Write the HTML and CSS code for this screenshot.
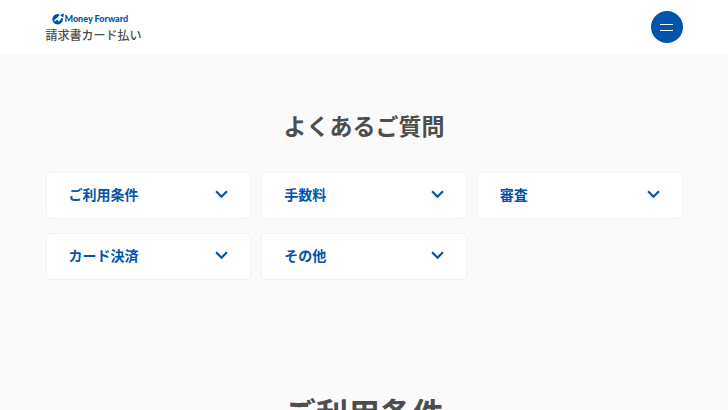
FILE: index.html
```html
<!DOCTYPE html>
<html lang="ja">
<head>
  <meta charset="UTF-8">
  <meta name="viewport" content="width=device-width, initial-scale=1">
  <title>よくあるご質問 | マネーフォワード 請求書カード払い</title>
  <link rel="stylesheet" href="styles.css">
</head>
<body>
  <!-- Header -->
  <header class="header">
    <a class="logo" href="#">
      <span class="logo-brand">
        <svg class="logo-mark" viewBox="0 0 24 24" aria-hidden="true">
          <path d="M15.5 3A10.5 10.5 0 1 0 21.6 11L19 9.2l-5 7.6-4-4.4-4.4 4.2" fill="#0054ac"/>
          <path d="M5 16l5-5 3.8 4.2L20.4 6" fill="none" stroke="#fff" stroke-width="2.2"/>
          <path d="M16 4.4L23.6.6l-.8 8.6z" fill="#0054ac"/>
        </svg>
        <span class="logo-name">Money Forward</span>
      </span>
      <span class="logo-service">請求書カード払い</span>
    </a>
    <button class="menu-button" type="button" aria-label="メニュー">
      <span class="menu-line"></span>
      <span class="menu-line"></span>
    </button>
  </header>

  <main class="main">
    <h1 class="page-title">よくあるご質問</h1>

    <!-- Category links -->
    <nav class="category-list">
      <a class="category" href="#terms">
        ご利用条件
        <svg class="chevron" viewBox="0 0 12 8" aria-hidden="true"><path d="M1 1l5 5 5-5"/></svg>
      </a>
      <a class="category" href="#fee">
        手数料
        <svg class="chevron" viewBox="0 0 12 8" aria-hidden="true"><path d="M1 1l5 5 5-5"/></svg>
      </a>
      <a class="category" href="#screening">
        審査
        <svg class="chevron" viewBox="0 0 12 8" aria-hidden="true"><path d="M1 1l5 5 5-5"/></svg>
      </a>
      <a class="category" href="#payment">
        カード決済
        <svg class="chevron" viewBox="0 0 12 8" aria-hidden="true"><path d="M1 1l5 5 5-5"/></svg>
      </a>
      <a class="category" href="#other">
        その他
        <svg class="chevron" viewBox="0 0 12 8" aria-hidden="true"><path d="M1 1l5 5 5-5"/></svg>
      </a>
    </nav>

    <h2 class="section-title" id="terms">ご利用条件</h2>
  </main>
</body>
</html>
```
FILE: styles.css
```css
* {
  margin: 0;
  padding: 0;
  box-sizing: border-box;
}
body {
  font-family: "Noto Sans CJK JP", sans-serif;
  background: #fafafa;
  color: #4d4d4d;
}
a {
  text-decoration: none;
}
/* Header */
.header {
  display: flex;
  justify-content: space-between;
  align-items: center;
  padding: 11px 6.25%;
  background: #fff;
}
.logo {
  display: flex;
  flex-direction: column;
  color: #4d4d4d;
}
.logo-brand {
  display: flex;
  align-items: center;
  gap: 1px;
  padding-left: 6px;
}
.logo-mark {
  width: 12px;
  height: 12px;
}
.logo-name {
  font-family: Lato, sans-serif;
  font-size: 9px;
  font-weight: 900;
  line-height: 16px;
  color: #0054ac;
}
.logo-service {
  font-size: 12px;
  font-weight: 500;
  line-height: 16px;
}
.menu-button {
  display: flex;
  flex-direction: column;
  align-items: center;
  justify-content: center;
  gap: 5px;
  width: 32px;
  height: 32px;
  border: none;
  border-radius: 50%;
  background: #0054ac;
  cursor: pointer;
}
.menu-line {
  width: 13px;
  height: 1px;
  background: #fff;
}
/* Questions */
.main {
  padding: 55px 6.25% 0;
}
.page-title {
  font-size: 23px;
  font-weight: 700;
  line-height: 33px;
  text-align: center;
}
.category-list {
  display: grid;
  grid-template-columns: repeat(3, 1fr);
  gap: 14px 10px;
  margin-top: 30px;
}
.category {
  display: flex;
  justify-content: space-between;
  align-items: center;
  padding: 11px 22px 13px;
  border: 1px solid #f2f2f2;
  border-radius: 5px;
  background: #fff;
  color: #0054ac;
  font-size: 14px;
  font-weight: 700;
  line-height: 21px;
}
.chevron {
  width: 13px;
  height: 9px;
  fill: none;
  stroke: #0054ac;
  stroke-width: 2;
}
.section-title {
  margin-top: 108px;
  font-size: 32px;
  font-weight: 700;
  line-height: 48px;
  text-align: center;
}
```
